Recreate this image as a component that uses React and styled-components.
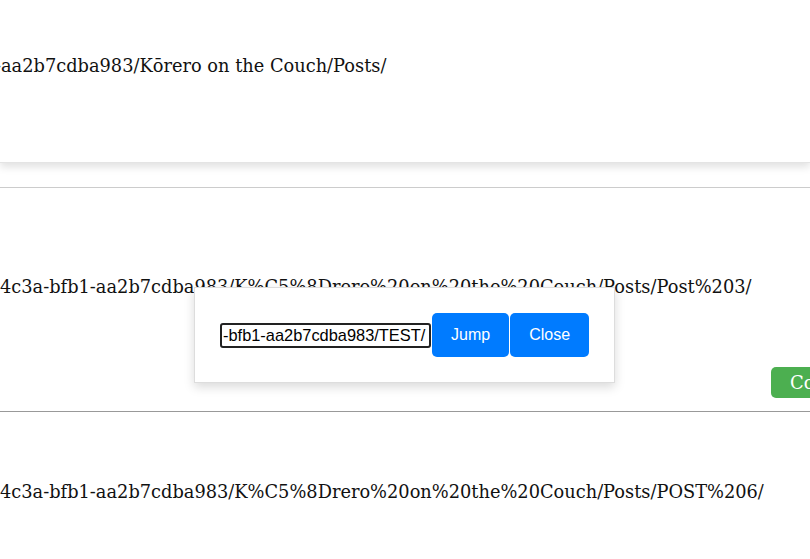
import React from 'react';
import styled, { createGlobalStyle } from 'styled-components';

const GlobalStyle = createGlobalStyle`
  body {
    margin: 0;
    background: #fff;
    font-family: "DejaVu Serif", Georgia, serif;
    overflow: hidden;
  }
`;

const Page = styled.div`
  position: relative;
  width: 810px;
  height: 559px;
  overflow: hidden;
`;

const TopCard = styled.div`
  background: #fff;
  padding: 54px 0 84px;
  box-shadow: 0 4px 8px rgba(0, 0, 0, 0.12);
  margin-bottom: 24px;
  border-bottom: 1px solid #e4e4e4;
`;

const Post = styled.div`
  padding: ${({ $top }) => $top}px 0 13px;
  border-top: ${({ $line }) => ($line ? `1px solid ${$line}` : 'none')};
`;

const PathText = styled.div`
  font-size: 17.8px;
  line-height: 24px;
  color: #111;
  white-space: nowrap;
  text-indent: ${({ $indent }) => $indent || 0}px;
`;

const ButtonRow = styled.div`
  display: flex;
  justify-content: flex-end;
  margin-top: 68px;
`;

const CopyButton = styled.button`
  flex-shrink: 0;
  width: 90px;
  height: 31px;
  margin-right: -51px;
  padding: 0 0 0 19px;
  text-align: left;
  border: none;
  border-radius: 5px;
  background: #4caf50;
  color: #fff;
  font-family: inherit;
  font-size: 18px;
`;

const Modal = styled.div`
  position: absolute;
  left: 194px;
  top: 287px;
  padding: 25px;
  display: flex;
  align-items: center;
  gap: 1px;
  background: #fff;
  border: 1px solid #ddd;
  box-shadow: 0 4px 10px rgba(0, 0, 0, 0.15);
`;

const PathInput = styled.input`
  width: 211px;
  height: 25px;
  box-sizing: border-box;
  padding: 0 1px;
  border: 2px solid #222;
  border-radius: 3px;
  font-family: "Liberation Sans", Arial, sans-serif;
  font-size: 16.4px;
  color: #000;
  outline: none;
`;

const ActionButton = styled.button`
  height: 44px;
  padding: 0 19px;
  border: none;
  border-radius: 5px;
  background: #007bff;
  color: #fff;
  font-family: "Liberation Sans", Arial, sans-serif;
  font-size: 16px;
`;

export default function App() {
  return (
    <Page>
      <GlobalStyle />
      <TopCard>
        <PathText $indent={-5}>-aa2b7cdba983/Kōrero on the Couch/Posts/</PathText>
      </TopCard>
      <Post $top={87} $line="#ccc">
        <PathText>4c3a-bfb1-aa2b7cdba983/K%C5%8Drero%20on%20the%20Couch/Posts/Post%203/</PathText>
        <ButtonRow>
          <CopyButton>Copy</CopyButton>
        </ButtonRow>
      </Post>
      <Post $top={68} $line="#999">
        <PathText>4c3a-bfb1-aa2b7cdba983/K%C5%8Drero%20on%20the%20Couch/Posts/POST%206/</PathText>
      </Post>
      <Modal>
        <PathInput readOnly value="-bfb1-aa2b7cdba983/TEST/" />
        <ActionButton>Jump</ActionButton>
        <ActionButton>Close</ActionButton>
      </Modal>
    </Page>
  );
}
